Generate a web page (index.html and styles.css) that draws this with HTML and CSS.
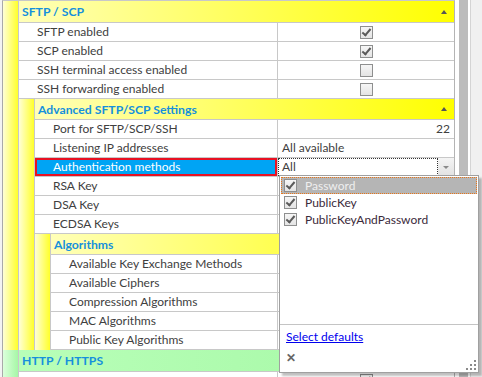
FILE: index.html
```html
<!DOCTYPE html>
<html>
<head>
  <title>SFTP / SCP settings</title>
  <link rel="stylesheet" href="styles.css">
</head>
<body>
  <div class="screen">
    <div class="gutter"></div>

    <div class="grid">
      <!-- SFTP / SCP -->
      <div class="group yellow">
        <div class="strip"></div>
        <div class="group-body">
          <div class="group-head top">SFTP / SCP<span class="caret"></span></div>
          <div class="row">
            <div class="label">SFTP enabled</div>
            <div class="value center"><span class="check on"></span></div>
          </div>
          <div class="row">
            <div class="label">SCP enabled</div>
            <div class="value center"><span class="check on"></span></div>
          </div>
          <div class="row">
            <div class="label">SSH terminal access enabled</div>
            <div class="value center"><span class="check"></span></div>
          </div>
          <div class="row">
            <div class="label">SSH forwarding enabled</div>
            <div class="value center"><span class="check"></span></div>
          </div>

          <div class="group yellow">
            <div class="strip"></div>
            <div class="group-body">
              <div class="group-head">Advanced SFTP/SCP Settings<span class="caret"></span></div>
              <div class="row">
                <div class="label">Port for SFTP/SCP/SSH</div>
                <div class="value right">22</div>
              </div>
              <div class="row">
                <div class="label">Listening IP addresses</div>
                <div class="value">All available</div>
              </div>
              <div class="row">
                <div class="label selected">Authentication methods</div>
                <div class="value combo">
                  <div class="combo-text">All</div>
                  <div class="combo-btn"><span class="down"></span></div>
                </div>
              </div>
              <div class="row">
                <div class="label">RSA Key</div>
                <div class="value"></div>
              </div>
              <div class="row">
                <div class="label">DSA Key</div>
                <div class="value"></div>
              </div>
              <div class="row">
                <div class="label">ECDSA Keys</div>
                <div class="value"></div>
              </div>

              <div class="group yellow">
                <div class="strip"></div>
                <div class="group-body">
                  <div class="group-head">Algorithms<span class="caret"></span></div>
                  <div class="row">
                    <div class="label">Available Key Exchange Methods</div>
                    <div class="value"></div>
                  </div>
                  <div class="row">
                    <div class="label">Available Ciphers</div>
                    <div class="value"></div>
                  </div>
                  <div class="row">
                    <div class="label">Compression Algorithms</div>
                    <div class="value"></div>
                  </div>
                  <div class="row">
                    <div class="label">MAC Algorithms</div>
                    <div class="value"></div>
                  </div>
                  <div class="row">
                    <div class="label">Public Key Algorithms</div>
                    <div class="value"></div>
                  </div>
                </div>
              </div>
            </div>
          </div>
        </div>
      </div>

      <!-- HTTP / HTTPS -->
      <div class="group green">
        <div class="strip"></div>
        <div class="group-body">
          <div class="group-head top">HTTP / HTTPS</div>
          <div class="row">
            <div class="label"></div>
            <div class="value center top"><span class="check on"></span></div>
          </div>
        </div>
      </div>
    </div>

    <div class="scroll"><div class="thumb"></div></div>
    <div class="side"></div>

    <!-- dropdown of the authentication methods -->
    <div class="popup">
      <div class="popup-list">
        <div class="item active"><span class="check on"></span>Password</div>
        <div class="item"><span class="check on"></span>PublicKey</div>
        <div class="item"><span class="check on"></span>PublicKeyAndPassword</div>
      </div>
      <div class="popup-foot">
        <a class="link" href="#">Select defaults</a>
        <div class="close">&#x2715;</div>
        <svg class="grip" width="11" height="11" viewBox="0 0 11 11">
          <g fill="#8a8a8a">
            <rect x="8" y="0" width="2" height="2"/>
            <rect x="4" y="4" width="2" height="2"/>
            <rect x="8" y="4" width="2" height="2"/>
            <rect x="0" y="8" width="2" height="2"/>
            <rect x="4" y="8" width="2" height="2"/>
            <rect x="8" y="8" width="2" height="2"/>
          </g>
        </svg>
      </div>
    </div>
  </div>
</body>
</html>
```

FILE: styles.css
```css
* {
  box-sizing: border-box;
}

body {
  margin: 0;
  background: #ffffff;
  font-family: Lato, 'Noto Sans', sans-serif;
  font-size: 12px;
  color: #404040;
}

.screen {
  position: relative;
  display: flex;
  height: 377px;
  overflow: hidden;
}

.gutter {
  width: 2px;
  background: #f3f3f3;
}

.grid {
  width: 453px;
  border-left: 1px solid #a9a9a9;
  border-right: 1px solid #b4b4b4;
  border-top: 1px solid #c8c8c8;
}

.group {
  display: flex;
}

.strip {
  width: 16px;
  flex-shrink: 0;
  border-right: 1px solid #c8c8c8;
}

.yellow > .strip {
  background: linear-gradient(to right, #ffffd6, #ffff2a);
}

.green > .strip {
  background: linear-gradient(to right, #dcffdc, #a6f7a6);
}

.group-body {
  flex: 1;
  min-width: 0;
}

.group-head {
  display: flex;
  align-items: center;
  justify-content: space-between;
  height: 21px;
  padding: 0 7px 0 3px;
  border-bottom: 1px solid #c8c8c8;
  font-weight: bold;
  font-size: 12.2px;
  color: #1690dc;
}

.group-head.top {
  height: 22px;
}

.yellow > .group-body > .group-head {
  background: linear-gradient(to right, #ffffb8, #ffff00);
}

.green > .group-body > .group-head {
  background: linear-gradient(to right, #b8ffb8, #a4f7a4);
}

.caret {
  width: 0;
  height: 0;
  border-left: 3px solid transparent;
  border-right: 3px solid transparent;
  border-bottom: 4px solid #555;
}

.row {
  display: flex;
  height: 19px;
  border-bottom: 1px solid #c8c8c8;
}

.label {
  flex: 1;
  min-width: 0;
  padding-left: 18px;
  line-height: 18px;
  white-space: nowrap;
  overflow: hidden;
}

.label.selected {
  background: #00a4f4;
  color: #ffffff;
  border: 2px solid #e81123;
  padding-left: 16px;
  line-height: 14px;
}

.value {
  width: 177px;
  flex-shrink: 0;
  border-left: 1px solid #c8c8c8;
  padding: 0 4px;
  line-height: 18px;
  display: flex;
  align-items: center;
}

.value.center {
  justify-content: center;
}

.value.right {
  justify-content: flex-end;
}

.value.top {
  align-items: flex-start;
  padding-top: 2px;
}

.value.combo {
  padding: 0;
}

.combo-text {
  flex: 1;
  height: 18px;
  border: 1px dotted #333;
  padding-left: 3px;
  line-height: 16px;
}

.combo-btn {
  width: 16px;
  height: 18px;
  display: flex;
  align-items: center;
  justify-content: center;
  background: linear-gradient(#f4f4f4, #e2e2e2);
}

.down {
  width: 0;
  height: 0;
  border-left: 3px solid transparent;
  border-right: 3px solid transparent;
  border-top: 3px solid #8a8a8a;
}

.check {
  position: relative;
  width: 13px;
  height: 13px;
  border: 1px solid #8e8f8f;
  background: linear-gradient(#f6f6f6, #e4e4e4);
}

.check.on::after {
  content: '';
  position: absolute;
  left: 3px;
  top: 0px;
  width: 3px;
  height: 7px;
  border-right: 2px solid #5a5a5a;
  border-bottom: 2px solid #5a5a5a;
  transform: rotate(40deg);
}

.scroll {
  width: 16px;
  border-right: 1px solid #d4d4d4;
  padding-left: 4px;
}

.thumb {
  width: 9px;
  height: 100%;
  background: #bcbcbc;
}

.side {
  flex: 1;
  background: #f0f0f0;
}

.popup {
  position: absolute;
  left: 279px;
  top: 175px;
  width: 200px;
  height: 198px;
  background: #ffffff;
  border: 1px solid #a0a0a0;
  box-shadow: 3px 3px 2px rgba(0, 0, 0, 0.25);
  display: flex;
  flex-direction: column;
}

.popup-list {
  flex: 1;
  padding: 1px 1px 0 1px;
  border-bottom: 1px solid #c4c4c4;
}

.item {
  display: flex;
  align-items: center;
  gap: 8px;
  height: 17px;
  padding-left: 2px;
  color: #3b2a3b;
  border: 1px solid transparent;
}

.item .check {
  display: inline-block;
}

.item.active {
  background: #b5b5b5;
  color: #efefef;
  border: 1px dotted #e8761a;
}

.popup-foot {
  position: relative;
  height: 47px;
  padding: 4px 0 0 6px;
}

.link {
  display: block;
  color: #0000ee;
  line-height: 16px;
}

.close {
  margin-top: 6px;
  font-size: 12px;
  font-weight: bold;
  color: #666;
  line-height: 14px;
}

.grip {
  position: absolute;
  right: 1px;
  bottom: 1px;
}
```
